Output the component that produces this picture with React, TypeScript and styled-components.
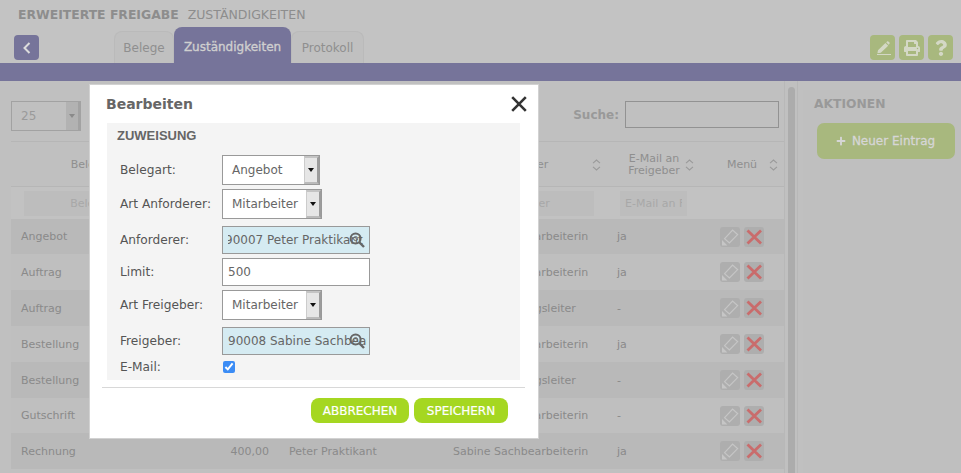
import React from "react";
import styled, { createGlobalStyle } from "styled-components";
import { FaPrint, FaQuestion, FaPlus } from "react-icons/fa";

const Global = createGlobalStyle`
  html, body { margin: 0; padding: 0; background: #c0c0c0; }
  body { font-family: "DejaVu Sans", Verdana, sans-serif; font-size: 12px; }
  * { box-sizing: border-box; }
`;

const Page = styled.div`
  position: relative;
  width: 961px;
  height: 473px;
  overflow: hidden;
  background: #c0c0c0;
  color: #8b8b8b;
`;
const Header = styled.header`
  height: 63px;
  background: #c3c3c3;
`;
const TitleBar = styled.div`
  height: 27px;
  padding: 7px 0 0 18px;
  display: flex;
  gap: 9px;
  font-size: 12.5px;
  line-height: 15px;
  color: #8d8d8d;
`;
const TitleStrong = styled.strong`
  font-weight: 700;
  font-size: 12.4px;
`;
const ToolRow = styled.div`
  height: 36px;
  display: flex;
  align-items: flex-end;
  padding: 0 8px 0 14px;
`;
const IconButton = styled.button<{ $tone: "purple" | "green" }>`
  width: 25px;
  height: 25px;
  margin-bottom: 3px;
  padding: 0;
  border: 0;
  border-radius: 4px;
  display: flex;
  align-items: center;
  justify-content: center;
  color: #d4d8c6;
  background: ${(p) => (p.$tone === "purple" ? "#76749a" : "#a8b87e")};
`;
const Tabs = styled.nav`
  display: flex;
  align-items: flex-end;
  margin-left: 75px;
`;
const Tab = styled.div<{ $active?: boolean; $w: number }>`
  width: ${(p) => p.$w}px;
  height: ${(p) => (p.$active ? 36 : 32)}px;
  padding-top: ${(p) => (p.$active ? 10 : 6)}px;
  text-align: center;
  border-radius: 8px 8px 0 0;
  font-size: 12px;
  line-height: 20px;
  background: ${(p) => (p.$active ? "#76749a" : "#c0c0c0")};
  color: ${(p) => (p.$active ? "#cfcfcf" : "#8f8f8f")};
  -webkit-text-stroke: ${(p) => (p.$active ? "0.35px #cfcfcf" : "0")};
  border: ${(p) => (p.$active ? "0" : "1px solid #bababa")};
  border-bottom: 0;
`;
const RightTools = styled.div`
  margin-left: auto;
  display: flex;
  gap: 4px;
`;
const Band = styled.div`
  height: 18px;
  background: #76749a;
`;
const Body = styled.div`
  display: flex;
  height: 392px;
`;
const Main = styled.main`
  width: 785px;
  padding: 20px 0 0 11px;
  border-right: 1px solid #b8b8b8;
`;
const Toolbar = styled.div`
  height: 30px;
  margin-bottom: 10px;
  padding-right: 5px;
  display: flex;
  align-items: flex-start;
`;
const PageSize = styled.div`
  width: 70px;
  height: 30px;
  border: 1px solid #a2a2a2;
  display: flex;
  align-items: center;
  justify-content: space-between;
  padding-left: 9px;
  font-size: 12px;
  color: #9a9a9a;
`;
const PageArrow = styled.span`
  width: 14px;
  height: 100%;
  background: #b2b2b2;
  border-right: 2px solid #a2a2a2;
  display: flex;
  align-items: center;
  justify-content: center;
  &::after {
    content: "";
    border: 3px solid transparent;
    border-top: 4px solid #8a8a8a;
    border-bottom: 0;
  }
`;
const SearchLabel = styled.label`
  margin: 7px 6px 0 auto;
  font-weight: 700;
  font-size: 12px;
  color: #999;
`;
const SearchBox = styled.div`
  width: 154px;
  height: 27px;
  border: 1px solid #929292;
`;
const Table = styled.table`
  width: 773px;
  table-layout: fixed;
  border-collapse: collapse;
  font-size: 11px;
`;
const Th = styled.th`
  height: 45px;
  padding: 0;
  font-weight: 400;
  font-size: 11px;
  line-height: 12px;
  color: #8f8f8f;
  border-top: 1px solid #b6b6b6;
  border-bottom: 1px solid #b6b6b6;
`;
const ThInner = styled.div<{ $pl: number; $pr: number }>`
  display: flex;
  align-items: center;
  padding: 1px ${(p) => p.$pr}px 0 ${(p) => p.$pl}px;
`;
const ThLabel = styled.span`
  flex: 1;
  text-align: center;
`;
const FilterCell = styled.td`
  height: 32px;
  padding: 4px 0 3px;
  background: #c2c2c2;
  text-align: center;
`;
const Filter = styled.div<{ $w: number; $ml: number }>`
  width: ${(p) => p.$w}px;
  height: 25px;
  margin-left: ${(p) => p.$ml}px;
  background: #bdbdbd;
  color: #a8a8a8;
  line-height: 25px;
  white-space: nowrap;
  font-weight: 400;
  overflow: hidden;
`;
const FilterClipped = styled(Filter)`
  padding: 0 5px;
  text-align: left;
  overflow: clip;
  overflow-clip-margin: content-box;
`;
const Row = styled.tr<{ $odd: boolean; $short: boolean }>`
  height: ${(p) => (p.$short ? 35 : 36)}px;
  background: ${(p) => (p.$odd ? "#b9b9b9" : "#bfbfbf")};
`;
const Td = styled.td<{ $right?: boolean }>`
  padding: 0 10px;
  color: #8a8a8a;
  white-space: nowrap;
  overflow: hidden;
  text-align: ${(p) => (p.$right ? "right" : "left")};
`;
const MenuCell = styled.div`
  display: flex;
  gap: 4px;
`;
const MiniButton = styled.span`
  width: 20px;
  height: 20px;
  border-radius: 3px;
  background: #aeaeae;
  display: flex;
  align-items: center;
  justify-content: center;
`;
const Gutter = styled.div`
  width: 13px;
  padding: 6px 2px 0 3px;
  border-right: 1px solid #b8b8b8;
`;
const Thumb = styled.div`
  height: 100%;
  border-radius: 4px 4px 0 0;
  background: #acacac;
`;
const Aside = styled.aside`
  flex: 1;
  margin: 9px 0 0 5px;
  padding: 0 6px 0 11px;
  background: #bfbfbf;
`;
const AsideTitle = styled.h3`
  margin: 0;
  padding-top: 7px;
  font-size: 12.3px;
  line-height: 15px;
  font-weight: 700;
  color: #999;
`;
const NewButton = styled.button`
  width: 138px;
  height: 36px;
  margin: 11px 0 0 3px;
  border: 0;
  border-radius: 7px;
  background: #a8b87e;
  color: #d6d6d6;
  font: 400 12px "DejaVu Sans", sans-serif;
  -webkit-text-stroke: 0.3px #d6d6d6;
  display: flex;
  align-items: center;
  justify-content: center;
  gap: 6px;
  padding-left: 5px;
`;

const Modal = styled.section`
  position: absolute;
  left: 90px;
  top: 85px;
  width: 448px;
  height: 353px;
  background: #fff;
  box-shadow: 0 0 0 1px #d2d2d2;
  color: #555;
`;
const ModalHead = styled.div`
  height: 38px;
  padding: 10px 11px 0 16px;
  display: flex;
  justify-content: space-between;
  align-items: flex-start;
`;
const ModalTitle = styled.h2`
  margin: 0;
  font-size: 14px;
  line-height: 18px;
  font-weight: 700;
  color: #666;
`;
const CloseButton = styled.button`
  width: 16px;
  height: 16px;
  margin-top: 1px;
  padding: 0;
  border: 0;
  background: none;
  display: block;
`;
const Section = styled.div`
  height: 257px;
  margin: 0 18px 0 17px;
  padding: 5px 0 0 13px;
  background: #f4f4f4;
`;
const SectionTitle = styled.h3`
  margin: 0 0 11px -3px;
  font: 700 13px/16px "Liberation Sans", Arial, sans-serif;
  color: #666;
`;
const Form = styled.div`
  display: flex;
  flex-direction: column;
`;
const Field = styled.div<{ $h: number; $top: number }>`
  height: ${(p) => p.$h}px;
  margin-top: ${(p) => p.$top}px;
  display: flex;
  align-items: center;
`;
const FieldLabel = styled.label`
  width: 102px;
  font-size: 12.2px;
  color: #555;
  white-space: nowrap;
`;
const SelectBox = styled.div<{ $w: number }>`
  width: ${(p) => p.$w}px;
  height: 30px;
  background: #fff;
  border: 1px solid #999;
  display: flex;
  align-items: center;
  justify-content: space-between;
  font-size: 12px;
  color: #666;
`;
const SelectText = styled.span`
  padding-left: 9px;
`;
const SelectArrow = styled.span`
  width: 15px;
  height: 28px;
  background: #e6e6e6;
  border-top: 2px solid #c4c4c4;
  border-left: 1px solid #ccc;
  border-right: 2px solid #9c9c9c;
  border-bottom: 2px solid #bbb;
  display: flex;
  align-items: center;
  justify-content: center;
  &::after {
    content: "";
    border: 3px solid transparent;
    border-top: 4px solid #111;
    border-bottom: 0;
  }
`;
const InputWrap = styled.div`
  position: relative;
  width: 148px;
  height: 28px;
`;
const TextInput = styled.input<{ $lookup?: boolean; $indent?: number }>`
  width: 100%;
  height: 100%;
  border: 1px solid #999;
  border-radius: 0;
  outline: 0;
  padding: 0 2px 0 5px;
  font: 12px "DejaVu Sans", sans-serif;
  color: #666;
  background: ${(p) => (p.$lookup ? "#d5ebf2" : "#fff")};
  text-indent: ${(p) => p.$indent ?? 0}px;
`;
const LookupIcon = styled.span`
  position: absolute;
  right: 5px;
  top: 6px;
  width: 16px;
  height: 16px;
`;
const Check = styled.input`
  width: 12px;
  height: 12px;
  margin: 0 0 0 1px;
  accent-color: #3b8cf5;
`;
const Rule = styled.hr`
  height: 1px;
  margin: 7px 13px 0 12px;
  border: 0;
  background: #d8d8d8;
`;
const Footer = styled.div`
  display: flex;
  justify-content: flex-end;
  gap: 5px;
  padding: 10px 30px 0 0;
`;
const PrimaryButton = styled.button<{ $w: number }>`
  width: ${(p) => p.$w}px;
  height: 25px;
  padding: 0;
  border: 0;
  border-radius: 8px;
  background: #a5d721;
  color: #fff;
  font: 12px "DejaVu Sans", sans-serif;
  -webkit-text-stroke: 0.2px #fff;
`;

const SortIcon = () => (
  <svg width="9" height="12" viewBox="0 0 9 12" fill="none" stroke="#9a9a9a" strokeWidth="1.1">
    <path d="M1 4.2 4.5 1 8 4.2M1 7.8 4.5 11 8 7.8" />
  </svg>
);
const EditGlyph = () => (
  <svg width="20" height="20" viewBox="0 0 20 20" fill="none">
    <path d="M4.6 11.6 12.6 3l5 4.6-8.2 8.4z" stroke="#c6c6c6" strokeWidth="1.2" />
    <path d="M2 18.4v-5.4l5.4 5.4z" fill="#c6c6c6" />
  </svg>
);
const DeleteGlyph = () => (
  <svg width="20" height="20" viewBox="0 0 20 20" fill="none" stroke="#c96c6c" strokeWidth="2.8">
    <path d="M3.5 3.5 17 16.5M17 3.5 3.5 16.5" />
  </svg>
);
const LensGlyph = () => (
  <svg width="16" height="16" viewBox="0 0 16 16" fill="none" stroke="#666">
    <circle cx="6.6" cy="6.6" r="5" strokeWidth="2" />
    <circle cx="6.6" cy="6.6" r="2" strokeWidth="1" />
    <path d="M10.5 10.5 15 15" strokeWidth="2.4" />
  </svg>
);

const rows = [
  ["Angebot", "100,00", "Peter Praktikant", "Sabine Sachbearbeiterin", "ja"],
  ["Auftrag", "200,00", "Peter Praktikant", "Sabine Sachbearbeiterin", "ja"],
  ["Auftrag", "500,00", "Peter Praktikant", "Anton Abteilungsleiter", "-"],
  ["Bestellung", "200,00", "Peter Praktikant", "Sabine Sachbearbeiterin", "ja"],
  ["Bestellung", "500,00", "Peter Praktikant", "Anton Abteilungsleiter", "-"],
  ["Gutschrift", "300,00", "Peter Praktikant", "Sabine Sachbearbeiterin", "-"],
  ["Rechnung", "400,00", "Peter Praktikant", "Sabine Sachbearbeiterin", "ja"],
];

export default function App() {
  return (
    <Page>
      <Global />
      <Header>
        <TitleBar>
          <TitleStrong>ERWEITERTE FREIGABE</TitleStrong>
          <span>ZUSTÄNDIGKEITEN</span>
        </TitleBar>
        <ToolRow>
          <IconButton $tone="purple">
            <svg width="10" height="12" viewBox="0 0 10 12" fill="none" stroke="#dcdcdc" strokeWidth="2">
              <path d="M7.5 1 2.5 6l5 5" />
            </svg>
          </IconButton>
          <Tabs>
            <Tab $w={60}>Belege</Tab>
            <Tab $w={117} $active>Zuständigkeiten</Tab>
            <Tab $w={73}>Protokoll</Tab>
          </Tabs>
          <RightTools>
            <IconButton $tone="green">
              <svg width="18" height="18" viewBox="0 0 18 18" fill="#d4d8c6">
                <path d="M4 11.2 11.4 4l2.8 2.7-7.4 7-3.4.6zM12.2 3.2l.9-.8c.4-.3.8-.3 1.2 0l1.2 1.2c.3.4.3.8 0 1.2l-.9.9zM3 15h14v1H3z" />
              </svg>
            </IconButton>
            <IconButton $tone="green"><FaPrint size={16} /></IconButton>
            <IconButton $tone="green"><FaQuestion size={16} /></IconButton>
          </RightTools>
        </ToolRow>
      </Header>
      <Band />
      <Body>
        <Main>
          <Toolbar>
            <PageSize>25<PageArrow /></PageSize>
            <SearchLabel>Suche:</SearchLabel>
            <SearchBox />
          </Toolbar>
          <Table>
            <colgroup>
              <col width="170" /><col width="98" /><col width="164" /><col width="164" /><col width="103" /><col width="74" />
            </colgroup>
            <thead>
              <tr>
                <Th><ThInner $pl={11} $pr={6}><ThLabel>Belegart</ThLabel><SortIcon /></ThInner></Th>
                <Th><ThInner $pl={10} $pr={6}><ThLabel>Limit</ThLabel><SortIcon /></ThInner></Th>
                <Th><ThInner $pl={10} $pr={6}><ThLabel>Anforderer</ThLabel><SortIcon /></ThInner></Th>
                <Th><ThInner $pl={10} $pr={6}><ThLabel>Freigeber</ThLabel><SortIcon /></ThInner></Th>
                <Th><ThInner $pl={16} $pr={16}><ThLabel>E-Mail an<br />Freigeber</ThLabel><SortIcon /></ThInner></Th>
                <Th><ThInner $pl={5} $pr={6}><ThLabel>Menü</ThLabel><SortIcon /></ThInner></Th>
              </tr>
              <tr>
                <FilterCell><Filter $w={139} $ml={13}>Belegart</Filter></FilterCell>
                <FilterCell><Filter $w={80} $ml={9}>Limit</Filter></FilterCell>
                <FilterCell><Filter $w={140} $ml={12}>Anforderer</Filter></FilterCell>
                <FilterCell><Filter $w={140} $ml={11}>Freigeber</Filter></FilterCell>
                <FilterCell><FilterClipped $w={67} $ml={13}>E-Mail an Freigeber</FilterClipped></FilterCell>
                <FilterCell />
              </tr>
            </thead>
            <tbody>
              {rows.map((r, i) => (
                <Row key={i} $odd={i % 2 === 0} $short={i === 0 || i === 5}>
                  <Td>{r[0]}</Td>
                  <Td $right>{r[1]}</Td>
                  <Td>{r[2]}</Td>
                  <Td>{r[3]}</Td>
                  <Td>{r[4]}</Td>
                  <Td>
                    <MenuCell>
                      <MiniButton><EditGlyph /></MiniButton>
                      <MiniButton><DeleteGlyph /></MiniButton>
                    </MenuCell>
                  </Td>
                </Row>
              ))}
            </tbody>
          </Table>
        </Main>
        <Gutter><Thumb /></Gutter>
        <Aside>
          <AsideTitle>AKTIONEN</AsideTitle>
          <NewButton><FaPlus size={10} />Neuer Eintrag</NewButton>
        </Aside>
      </Body>

      <Modal>
        <ModalHead>
          <ModalTitle>Bearbeiten</ModalTitle>
          <CloseButton aria-label="Schließen">
            <svg width="16" height="16" viewBox="0 0 16 16" fill="none" stroke="#333" strokeWidth="2.6">
              <path d="M1.2 1.2 14.8 14.8M14.8 1.2 1.2 14.8" />
            </svg>
          </CloseButton>
        </ModalHead>
        <Section>
          <SectionTitle>ZUWEISUNG</SectionTitle>
          <Form>
            <Field $h={30} $top={0}>
              <FieldLabel>Belegart:</FieldLabel>
              <SelectBox $w={98}><SelectText>Angebot</SelectText><SelectArrow /></SelectBox>
            </Field>
            <Field $h={30} $top={4}>
              <FieldLabel>Art Anforderer:</FieldLabel>
              <SelectBox $w={100}><SelectText>Mitarbeiter</SelectText><SelectArrow /></SelectBox>
            </Field>
            <Field $h={28} $top={7}>
              <FieldLabel>Anforderer:</FieldLabel>
              <InputWrap>
                <TextInput $lookup $indent={-3} readOnly value="90007 Peter Praktikant" />
                <LookupIcon><LensGlyph /></LookupIcon>
              </InputWrap>
            </Field>
            <Field $h={28} $top={4}>
              <FieldLabel>Limit:</FieldLabel>
              <InputWrap><TextInput readOnly value="500" /></InputWrap>
            </Field>
            <Field $h={30} $top={4}>
              <FieldLabel>Art Freigeber:</FieldLabel>
              <SelectBox $w={100}><SelectText>Mitarbeiter</SelectText><SelectArrow /></SelectBox>
            </Field>
            <Field $h={28} $top={7}>
              <FieldLabel>Freigeber:</FieldLabel>
              <InputWrap>
                <TextInput $lookup readOnly value="90008 Sabine Sachbearbeiterin" />
                <LookupIcon><LensGlyph /></LookupIcon>
              </InputWrap>
            </Field>
            <Field $h={18} $top={3}>
              <FieldLabel>E-Mail:</FieldLabel>
              <Check type="checkbox" checked readOnly />
            </Field>
          </Form>
        </Section>
        <Rule />
        <Footer>
          <PrimaryButton $w={98}>ABBRECHEN</PrimaryButton>
          <PrimaryButton $w={94}>SPEICHERN</PrimaryButton>
        </Footer>
      </Modal>
    </Page>
  );
}
